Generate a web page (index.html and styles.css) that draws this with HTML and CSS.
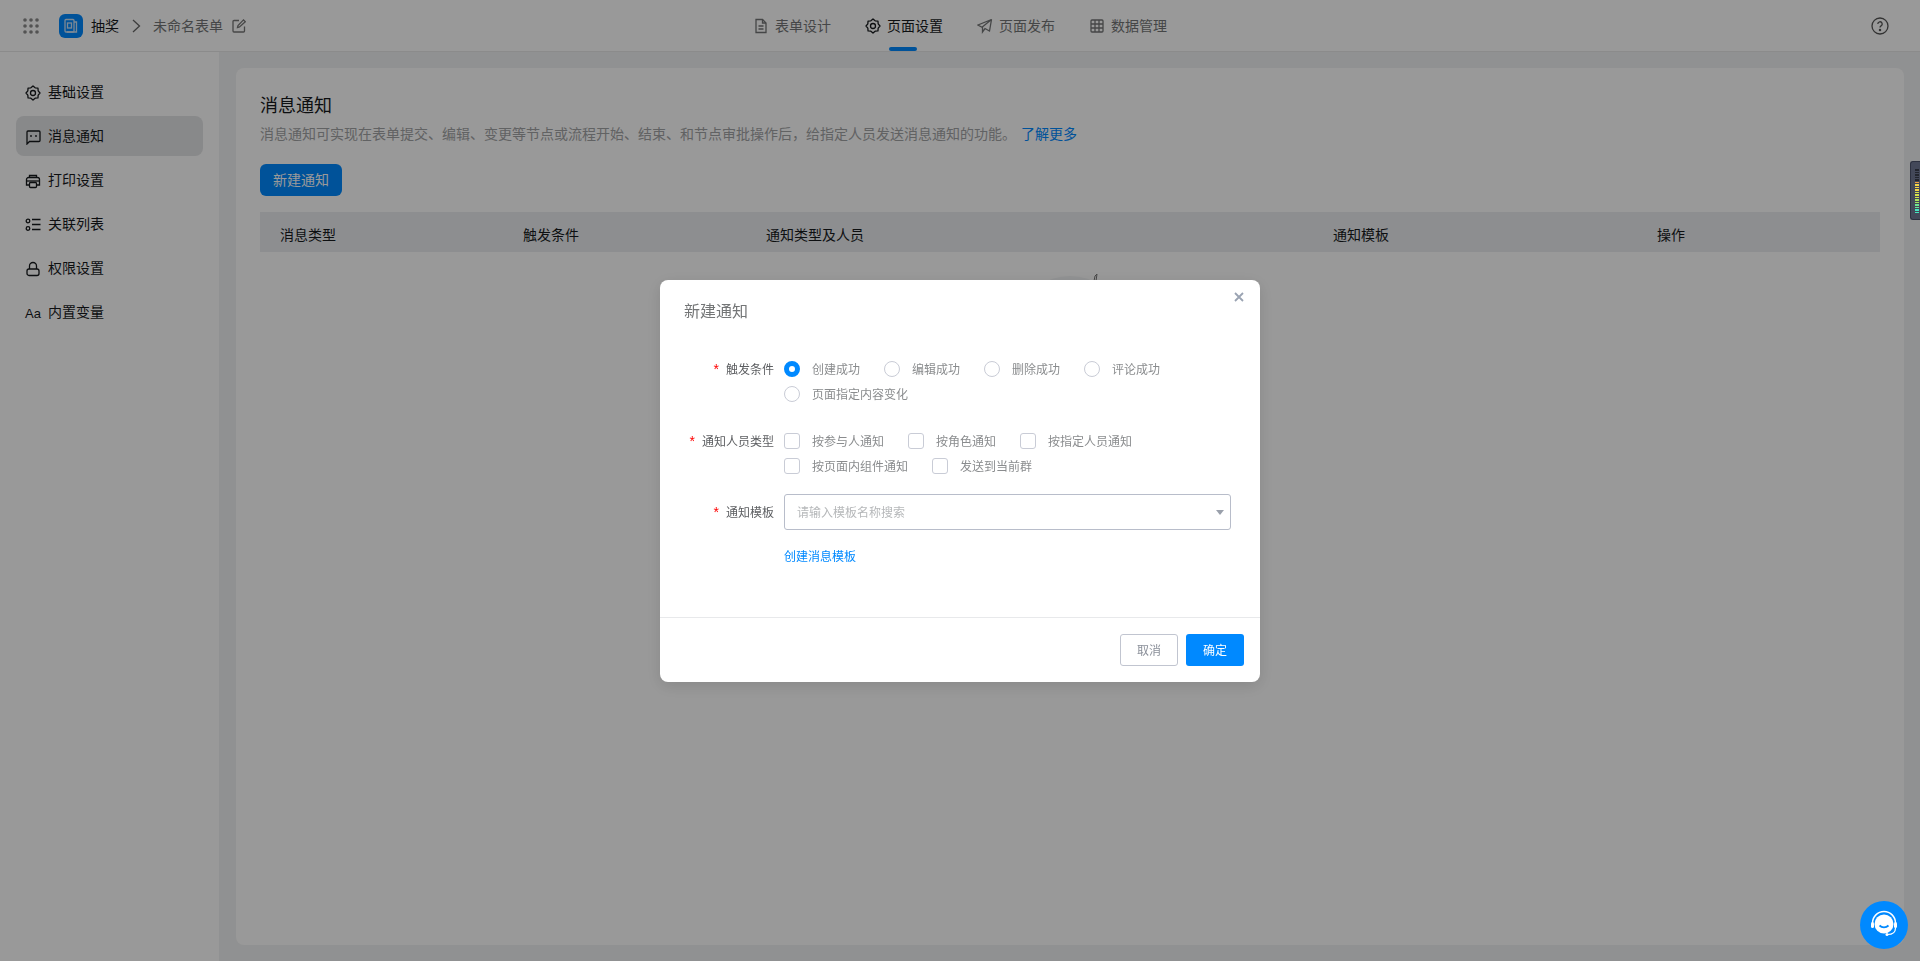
FILE: index.html
```html
<!DOCTYPE html>
<html lang="en">
<head>
    <meta charset="UTF-8">
    <title>消息通知</title>
    <link rel="stylesheet" href="styles.css">
</head>
<body>
    <div class="app">
        <header class="topbar">
            <div class="topbar-left">
                <svg class="apps" width="16" height="16" viewBox="0 0 16 16" fill="#8a8a8a">
                    <circle cx="2" cy="2" r="1.800"/><circle cx="8" cy="2" r="1.800"/><circle cx="14" cy="2" r="1.800"/>
                    <circle cx="2" cy="8" r="1.800"/><circle cx="8" cy="8" r="1.800"/><circle cx="14" cy="8" r="1.800"/>
                    <circle cx="2" cy="14" r="1.800"/><circle cx="8" cy="14" r="1.800"/><circle cx="14" cy="14" r="1.800"/>
                </svg>
                <span class="logo">
                    <svg width="16" height="16" viewBox="0 0 16 16" fill="none" stroke="#cfe4f7" stroke-width="1.300">
                        <rect x="2" y="1.500" width="9" height="12.500" rx="1"/>
                        <path d="M11 4h2.500v10H4"/>
                        <rect x="4.500" y="5" width="4" height="5"/>
                    </svg>
                </span>
                <span class="app-name">抽奖</span>
                <svg class="chev" width="9" height="14" viewBox="0 0 9 14" fill="none" stroke="#666" stroke-width="1.300"><path d="M1 1l6.500 6L1 13"/></svg>
                <span class="form-name">未命名表单</span>
                <svg width="14" height="14" viewBox="0 0 14 14" fill="none" stroke="#777" stroke-width="1.300">
                    <path d="M7 1.500H2a1 1 0 0 0-1 1V12a1 1 0 0 0 1 1h9.500a1 1 0 0 0 1-1V7.500"/>
                    <path d="M5.500 8.500l.5-2L11.500.9l1.800 1.800L7.500 8z"/>
                </svg>
            </div>
            <nav class="tabs">
                <a class="tab">
                    <svg width="16" height="16" viewBox="0 0 16 16" fill="none" stroke="currentColor" stroke-width="1.300"><path d="M3 1.500h6.500L13 5v9.500H3z"/><path d="M9.500 1.500V5H13M5.500 8h5M5.500 11h5"/></svg>
                    表单设计
                </a>
                <a class="tab tab-active">
                    <svg width="16" height="16" viewBox="0 0 16 16" fill="none" stroke="currentColor" stroke-width="1.300" stroke-linejoin="round"><polygon points="15,8 13.170,10.140 12.950,12.950 10.140,13.170 8,15 5.860,13.170 3.050,12.950 2.830,10.140 1,8 2.830,5.860 3.050,3.050 5.860,2.830 8,1 10.140,2.830 12.950,3.050 13.170,5.860"/><circle cx="8" cy="8" r="2.500"/></svg>
                    页面设置
                </a>
                <a class="tab">
                    <svg width="16" height="16" viewBox="0 0 16 16" fill="none" stroke="currentColor" stroke-width="1.300"><path d="M14.500 1.500L1 7l4 2.200L14.500 1.500zM14.500 1.500L12.500 13 8 10.500 5.500 14V9.200"/></svg>
                    页面发布
                </a>
                <a class="tab">
                    <svg width="16" height="16" viewBox="0 0 16 16" fill="none" stroke="currentColor" stroke-width="1.300"><rect x="2" y="2" width="12" height="12" rx="1"/><path d="M2 6h12M2 10h12M6 2v12M10 2v12"/></svg>
                    数据管理
                </a>
            </nav>
            <div class="topbar-right">
                <svg class="help" width="18" height="18" viewBox="0 0 18 18" fill="none" stroke="#555" stroke-width="1.300">
                    <circle cx="9" cy="9" r="8"/>
                    <path d="M6.800 7a2.200 2.200 0 1 1 3.300 1.900c-.7.400-1.100.9-1.100 1.700"/>
                    <circle cx="9" cy="13" r=".6" fill="#555"/>
                </svg>
            </div>
        </header>

        <div class="main">
            <aside class="sidebar">
                <a class="side-item">
                    <svg width="16" height="16" viewBox="0 0 16 16" fill="none" stroke="currentColor" stroke-width="1.300" stroke-linejoin="round"><polygon points="15,8 13.170,10.140 12.950,12.950 10.140,13.170 8,15 5.860,13.170 3.050,12.950 2.830,10.140 1,8 2.830,5.860 3.050,3.050 5.860,2.830 8,1 10.140,2.830 12.950,3.050 13.170,5.860"/><circle cx="8" cy="8" r="2.500"/></svg>
                    基础设置
                </a>
                <a class="side-item side-active">
                    <svg width="16" height="16" viewBox="0 0 16 16" fill="none" stroke="currentColor" stroke-width="1.300"><path d="M2 15V3a1 1 0 0 1 1-1h11a1 1 0 0 1 1 1v8.500a1 1 0 0 1-1 1H4.500z"/><circle cx="6" cy="7" r=".9" fill="currentColor" stroke="none"/><circle cx="11" cy="7" r=".9" fill="currentColor" stroke="none"/></svg>
                    消息通知
                </a>
                <a class="side-item">
                    <svg width="16" height="16" viewBox="0 0 16 16" fill="none" stroke="currentColor" stroke-width="1.300"><path d="M4.500 4.500V2.500h7v2M4.500 12H1.500V6.500a2 2 0 0 1 2-2h9a2 2 0 0 1 2 2V12h-3"/><rect x="4.500" y="9.500" width="7" height="5" rx="1"/><path d="M1.500 8h13"/></svg>
                    打印设置
                </a>
                <a class="side-item">
                    <svg width="16" height="16" viewBox="0 0 16 16" fill="none" stroke="currentColor" stroke-width="1.300"><circle cx="3" cy="4" r="1.800"/><circle cx="3" cy="11.500" r="1.800"/><path d="M7 2.500h8.500M7 7.500h8.500M7 12.500h8.500"/></svg>
                    关联列表
                </a>
                <a class="side-item">
                    <svg width="16" height="16" viewBox="0 0 16 16" fill="none" stroke="currentColor" stroke-width="1.300"><rect x="2" y="8" width="12" height="6.500" rx="2"/><path d="M4.500 8V5a3.500 3.500 0 0 1 7 0v3"/></svg>
                    权限设置
                </a>
                <a class="side-item">
                    <span class="aa">Aa</span>
                    内置变量
                </a>
            </aside>

            <section class="content">
                <div class="card">
                    <h1 class="card-title">消息通知</h1>
                    <p class="card-desc">消息通知可实现在表单提交、编辑、变更等节点或流程开始、结束、和节点审批操作后，给指定人员发送消息通知的功能。 <a class="more">了解更多</a></p>
                    <button class="btn-new">新建通知</button>
                    <div class="thead">
                        <span class="col col-a">消息类型</span>
                        <span class="col col-b">触发条件</span>
                        <span class="col col-c">通知类型及人员</span>
                        <span class="col col-d">通知模板</span>
                        <span class="col col-e">操作</span>
                    </div>
                    <svg class="empty" width="120" height="60" viewBox="0 0 120 60" fill="none">
                        <ellipse cx="60" cy="40" rx="46" ry="36" fill="#f4f5f6"/>
                        <path d="M84 9l1-5 2-2-1 7z" stroke="#777" stroke-width="1"/>
                    </svg>
                </div>
            </section>
        </div>
    </div>

    <div class="overlay"></div>

    <div class="meter">
        <i class="off"></i><i class="off"></i><i class="off"></i><i class="off"></i><i class="off"></i>
        <i class="c1"></i><i class="c2"></i><i class="c2"></i><i class="c2"></i><i class="c3"></i>
        <i class="c3"></i><i class="c3"></i><i class="c4"></i><i class="c4"></i><i class="c5"></i>
        <i class="c5"></i><i class="c6"></i><i class="c6"></i>
    </div>

    <div class="dialog">
        <div class="dialog-head">
            <span class="dialog-title">新建通知</span>
            <svg class="dialog-close" width="10" height="10" viewBox="0 0 10 10" stroke="#9aa3b2" stroke-width="1.800"><path d="M1 1l8 8M9 1L1 9"/></svg>
        </div>
        <div class="dialog-body">
            <div class="field field-trigger">
                <label class="field-label"><em>*</em>触发条件</label>
                <div class="options">
                    <span class="opt"><i class="radio radio-on"></i>创建成功</span>
                    <span class="opt"><i class="radio"></i>编辑成功</span>
                    <span class="opt"><i class="radio"></i>删除成功</span>
                    <span class="opt"><i class="radio"></i>评论成功</span>
                    <span class="opt"><i class="radio"></i>页面指定内容变化</span>
                </div>
            </div>
            <div class="field field-people">
                <label class="field-label"><em>*</em>通知人员类型</label>
                <div class="options">
                    <span class="opt"><i class="check"></i>按参与人通知</span>
                    <span class="opt"><i class="check"></i>按角色通知</span>
                    <span class="opt"><i class="check"></i>按指定人员通知</span>
                    <span class="opt"><i class="check"></i>按页面内组件通知</span>
                    <span class="opt"><i class="check"></i>发送到当前群</span>
                </div>
            </div>
            <div class="field field-template">
                <label class="field-label"><em>*</em>通知模板</label>
                <div class="select">
                    <span class="placeholder">请输入模板名称搜索</span>
                    <i class="caret"></i>
                </div>
            </div>
            <a class="create-link">创建消息模板</a>
        </div>
        <div class="dialog-foot">
            <button class="btn-cancel">取消</button>
            <button class="btn-ok">确定</button>
        </div>
    </div>

    <div class="chat">
        <svg width="34" height="34" viewBox="0 0 34 34" fill="none">
            <circle cx="17" cy="16" r="9.500" fill="#fff"/>
            <path d="M5.500 15a11.500 11.500 0 0 1 23 0" stroke="#fff" stroke-width="1.500"/>
            <rect x="4" y="14" width="3" height="6" rx="1.500" fill="#fff"/>
            <rect x="27" y="14" width="3" height="6" rx="1.500" fill="#fff"/>
            <path d="M28.500 20c0 4-3 6.500-8 6.500" stroke="#fff" stroke-width="1.200"/>
            <circle cx="20" cy="26.500" r="1.500" fill="#fff"/>
            <path d="M12.500 17.500c2.500 2.500 6.500 2.500 9 0" stroke="#0089ff" stroke-width="1.800"/>
        </svg>
    </div>
</body>
</html>
```
FILE: styles.css
```css
*{
    margin: 0;
    padding: 0;
    box-sizing: border-box;
}
body{
    font-family: "Liberation Sans", "Noto Sans CJK SC", sans-serif;
    font-size: 14px;
    color: #171a1d;
    background-color: #fff;
    overflow: hidden;
}
a{
    cursor: pointer;
}
.app{
    display: flex;
    flex-direction: column;
    height: 961px;
}

/* top bar */
.topbar{
    display: flex;
    align-items: center;
    flex: none;
    height: 52px;
    background-color: #fff;
    border-bottom: 1px solid #e8e8e8;
}
.topbar-left{
    flex: 1;
    display: flex;
    align-items: center;
    padding-left: 23px;
}
.apps{
    margin-right: 20px;
}
.logo{
    display: flex;
    align-items: center;
    justify-content: center;
    width: 24px;
    height: 24px;
    border-radius: 6px;
    background-color: #0089ff;
    margin-right: 8px;
}
.app-name{
    margin-top: -2px;
    color: #171a1d;
}
.chev{
    margin: 0 12px 0 13px;
}
.form-name{
    margin-top: -2px;
    margin-right: 9px;
    color: #747677;
}
.tabs{
    display: flex;
    gap: 34px;
    height: 51px;
}
.tab{
    position: relative;
    display: flex;
    align-items: center;
    gap: 6px;
    padding-bottom: 2px;
    color: #747677;
}
.tab svg{
    margin-top: 2px;
}
.tab-active{
    color: #171a1d;
}
.tab-active::after{
    content: "";
    position: absolute;
    left: 24px;
    bottom: 0;
    width: 28px;
    height: 4px;
    border-radius: 2px;
    background-color: #0089ff;
}
.topbar-right{
    flex: 1;
    display: flex;
    justify-content: flex-end;
    padding-right: 23px;
}
.help{
    margin-right: 8px;
}

/* sidebar */
.main{
    flex: 1;
    display: flex;
    min-height: 0;
}
.sidebar{
    flex: none;
    width: 219px;
    padding: 20px 16px 0;
    background-color: #fff;
}
.side-item{
    display: flex;
    align-items: center;
    gap: 7px;
    height: 40px;
    margin-bottom: 4px;
    padding: 0 0 2px 9px;
    border-radius: 8px;
    color: #171a1d;
}
.side-item svg{
    margin-top: 4px;
}
.side-active{
    background-color: #e3e4e6;
}
.aa{
    width: 16px;
    margin-top: 4px;
    font-size: 13px;
    text-align: center;
}

/* content */
.content{
    flex: 1;
    padding: 16px 16px 16px 17px;
    background-color: #f1f2f3;
}
.card{
    height: 100%;
    padding: 24px;
    border-radius: 8px;
    background-color: #fff;
}
.card-title{
    font-size: 18px;
    font-weight: normal;
    line-height: 28px;
}
.card-desc{
    margin-top: 4px;
    line-height: 20px;
    color: #a2a3a5;
}
.more{
    margin-left: 1px;
    color: #0089ff;
}
.btn-new{
    display: block;
    margin-top: 20px;
    padding-bottom: 2px;
    width: 82px;
    height: 32px;
    border: 0;
    border-radius: 6px;
    font: inherit;
    color: #fff;
    background-color: #0089ff;
}
.thead{
    display: flex;
    align-items: center;
    height: 40px;
    margin-top: 16px;
    padding-top: 4px;
    background-color: #ebedf0;
}
.col{
    padding-left: 20px;
}
.col-a,
.col-b{
    width: 243px;
}
.col-c{
    width: 567px;
}
.col-d{
    width: 324px;
}
.empty{
    display: block;
    margin: 20px auto 0;
}

/* floating bits */
.overlay{
    position: fixed;
    top: 0;
    right: 0;
    bottom: 0;
    left: 0;
    background-color: rgba(0,0,0,0.4);
}
.meter{
    position: fixed;
    right: 0;
    top: 161px;
    display: flex;
    flex-direction: column;
    gap: 1px;
    width: 10px;
    height: 59px;
    padding: 7px 0 0 4px;
    border-radius: 3px 0 0 3px;
    background-color: #434859;
    border: 1px solid #2d3140;
    border-right: 0;
}
.meter i{
    display: block;
    width: 4px;
    height: 1.500px;
}
.meter .off{ background-color: #22252e; }
.meter .c1{ background-color: #f0a040; }
.meter .c2{ background-color: #f2d648; }
.meter .c3{ background-color: #d6e24c; }
.meter .c4{ background-color: #a6e45e; }
.meter .c5{ background-color: #6fe494; }
.meter .c6{ background-color: #45e6c0; }

/* dialog */
.dialog{
    position: fixed;
    left: 660px;
    top: 280px;
    display: flex;
    flex-direction: column;
    width: 600px;
    height: 402px;
    border-radius: 8px;
    background-color: #fff;
    box-shadow: 0 4px 16px rgba(0,0,0,0.12);
}
.dialog-head{
    position: relative;
    flex: none;
    height: 64px;
    padding: 21px 24px 0;
}
.dialog-title{
    font-size: 16px;
    line-height: 22px;
    color: #747677;
}
.dialog-close{
    position: absolute;
    right: 16px;
    top: 12px;
}
.dialog-body{
    flex: 1;
    padding-top: 12px;
    font-size: 12px;
    color: #747677;
}
.field{
    display: flex;
}
.field-label{
    flex: none;
    width: 114px;
    margin-right: 10px;
    line-height: 26px;
    text-align: right;
    color: #5c5e61;
}
.field-label em{
    margin-right: 7px;
    font-size: 14px;
    font-style: normal;
    color: #f00;
}
.options{
    display: flex;
    flex-wrap: wrap;
    column-gap: 24px;
    width: 446px;
}
.opt{
    display: flex;
    align-items: center;
    height: 25px;
    color: #8a8c8e;
}
.radio,
.check{
    flex: none;
    display: block;
    width: 16px;
    height: 16px;
    margin-right: 12px;
    background-color: #fff;
    border: 1px solid #c9ccd6;
}
.radio{
    border-radius: 50%;
}
.radio-on{
    border: 5px solid #0089ff;
}
.check{
    border-radius: 3px;
}
.field-people{
    margin-top: 22px;
}
.field-template{
    margin-top: 16px;
    align-items: center;
}
.select{
    position: relative;
    display: flex;
    align-items: center;
    width: 447px;
    height: 36px;
    padding: 0 0 1px 12px;
    border: 1px solid #b8bdca;
    border-radius: 3px;
}
.placeholder{
    color: #b6b8ba;
}
.caret{
    position: absolute;
    right: 6px;
    top: 15px;
    border-top: 5px solid #9aa0ab;
    border-left: 4px solid transparent;
    border-right: 4px solid transparent;
}
.create-link{
    display: block;
    margin: 19px 0 0 124px;
    line-height: 17px;
    color: #0089ff;
}
.dialog-foot{
    flex: none;
    display: flex;
    justify-content: flex-end;
    gap: 8px;
    height: 65px;
    padding: 16px 16px 0;
    border-top: 1px solid #e8e9eb;
}
.btn-cancel,
.btn-ok{
    width: 58px;
    height: 32px;
    padding-bottom: 2px;
    border-radius: 3px;
    font: inherit;
    font-size: 12px;
}
.btn-cancel{
    color: #8a8f99;
    background-color: #fff;
    border: 1px solid #c1c5d0;
}
.btn-ok{
    color: #fff;
    background-color: #0089ff;
    border: 0;
}
.chat{
    position: fixed;
    left: 1860px;
    top: 901px;
    display: flex;
    align-items: center;
    justify-content: center;
    width: 48px;
    height: 48px;
    border-radius: 50%;
    background-color: #0089ff;
}
```
